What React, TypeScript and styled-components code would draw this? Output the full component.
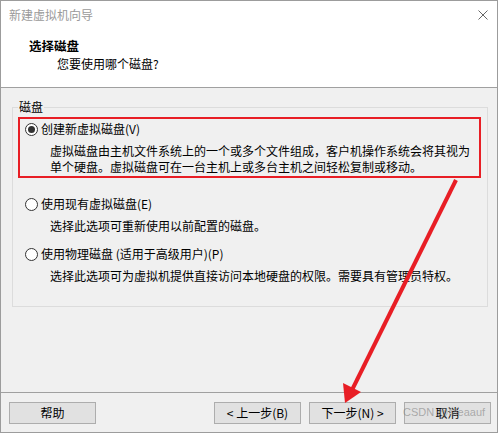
import React from "react";
import styled, { createGlobalStyle } from "styled-components";

const Global = createGlobalStyle`
  html, body { margin: 0; padding: 0; background: #ffffff; }
  body {
    font-family: "Noto Sans CJK SC", "Microsoft YaHei", sans-serif;
    font-size: 12px;
    color: #000;
  }
`;

const Window = styled.div`
  position: relative;
  width: 498px;
  height: 433px;
  box-sizing: border-box;
  border: 1px solid #9c9c9c;
  display: flex;
  flex-direction: column;
  background: #fff;
  overflow: hidden;
`;

const TitleBar = styled.div`
  height: 28px;
  display: flex;
  align-items: center;
  justify-content: space-between;
  padding: 0 9px 0 8px;
  background: #fff;
`;

const TitleText = styled.span`
  color: #9a9a9a;
  font-size: 12px;
  line-height: 16px;
`;

const Header = styled.div`
  height: 58px;
  box-sizing: content-box;
  background: #fff;
  border-bottom: 1px solid #a0a0a0;
  display: flex;
  flex-direction: column;
`;

const HeaderTitle = styled.div`
  margin-top: 9px;
  padding-left: 28px;
  font-weight: bold;
  font-size: 12.5px;
  line-height: 16px;
`;

const HeaderSub = styled.div`
  margin-top: 2px;
  padding-left: 56px;
  line-height: 16px;
`;

const Body = styled.div`
  flex: 1;
  background: #f0f0f0;
  padding: 11px 9px 0 11px;
`;

const Group = styled.fieldset`
  margin: 0;
  border: 1px solid #dcdcdc;
  padding: 0 6px 19px 5px;
`;

const Legend = styled.legend`
  padding: 0 1px;
  line-height: 16px;
  font-size: 12px;
`;

const Option = styled.div<{ $highlight?: boolean; $gap: number }>`
  margin-top: ${(p) => p.$gap}px;
  border: 2px solid ${(p) => (p.$highlight ? "#e81e25" : "transparent")};
  padding: 2px 0 1px 5px;
`;

const OptionRow = styled.div`
  display: flex;
  align-items: center;
  gap: 3px;
  line-height: 16px;
`;

const Radio = styled.span<{ $checked?: boolean }>`
  width: 13px;
  height: 13px;
  box-sizing: border-box;
  border: 1px solid #333;
  border-radius: 50%;
  background: #fff;
  display: inline-flex;
  align-items: center;
  justify-content: center;
  &::after {
    content: "";
    width: 7px;
    height: 7px;
    border-radius: 50%;
    background: ${(p) => (p.$checked ? "#333" : "transparent")};
  }
`;

const Desc = styled.div`
  margin-top: 6px;
  padding-left: 25px;
  line-height: 16px;
`;

const Footer = styled.div`
  border-top: 1px solid #a0a0a0;
  background: #f0f0f0;
  padding: 9px 6px 8px 8px;
  display: flex;
  align-items: center;
  gap: 8px;
`;

const Spacer = styled.div`
  flex: 1;
`;

const Button = styled.button`
  width: 87px;
  height: 22px;
  box-sizing: border-box;
  border: 1px solid #adadad;
  background: #e1e1e1;
  font-family: "Noto Sans CJK SC", "Microsoft YaHei", sans-serif;
  font-size: 12px;
  color: #000;
  padding: 0;
  line-height: 16px;
`;

const Overlay = styled.svg`
  position: absolute;
  left: -1px;
  top: -1px;
  width: 499px;
  height: 433px;
  pointer-events: none;
`;

const Watermark = styled.span`
  position: absolute;
  left: 402px;
  top: 405px;
  font-family: "Liberation Sans", Arial, sans-serif;
  font-size: 11px;
  color: rgba(130, 130, 130, 0.6);
  pointer-events: none;
`;

export default function App() {
  return (
    <>
      <Global />
      <Window>
        <TitleBar>
          <TitleText>新建虚拟机向导</TitleText>
          <svg width="10" height="10" viewBox="0 0 10 10">
            <path d="M0.5 0.5 L9.5 9.5 M9.5 0.5 L0.5 9.5" stroke="#666" strokeWidth="1" />
          </svg>
        </TitleBar>
        <Header>
          <HeaderTitle>选择磁盘</HeaderTitle>
          <HeaderSub>您要使用哪个磁盘?</HeaderSub>
        </Header>
        <Body>
          <Group>
            <Legend>磁盘</Legend>
            <Option $highlight $gap={2}>
              <OptionRow>
                <Radio $checked />
                <span>创建新虚拟磁盘(V)</span>
              </OptionRow>
              <Desc>
                虚拟磁盘由主机文件系统上的一个或多个文件组成，客户机操作系统会将其视为
                <br />
                单个硬盘。虚拟磁盘可在一台主机上或多台主机之间轻松复制或移动。
              </Desc>
            </Option>
            <Option $gap={14}>
              <OptionRow>
                <Radio />
                <span>使用现有虚拟磁盘(E)</span>
              </OptionRow>
              <Desc>选择此选项可重新使用以前配置的磁盘。</Desc>
            </Option>
            <Option $gap={5}>
              <OptionRow>
                <Radio />
                <span>使用物理磁盘 (适用于高级用户)(P)</span>
              </OptionRow>
              <Desc>选择此选项可为虚拟机提供直接访问本地硬盘的权限。需要具有管理员特权。</Desc>
            </Option>
          </Group>
        </Body>
        <Footer>
          <Button>帮助</Button>
          <Spacer />
          <Button>&lt; 上一步(B)</Button>
          <Button>下一步(N) &gt;</Button>
          <Button>取消</Button>
        </Footer>
        <Overlay viewBox="0 0 499 433">
          <line x1="456" y1="180" x2="351" y2="392" stroke="#e81e25" strokeWidth="4" />
          <polygon points="345,403 361,392 343,383" fill="#e81e25" />
        </Overlay>
        <Watermark>CSDN @Meaauf</Watermark>
      </Window>
    </>
  );
}
